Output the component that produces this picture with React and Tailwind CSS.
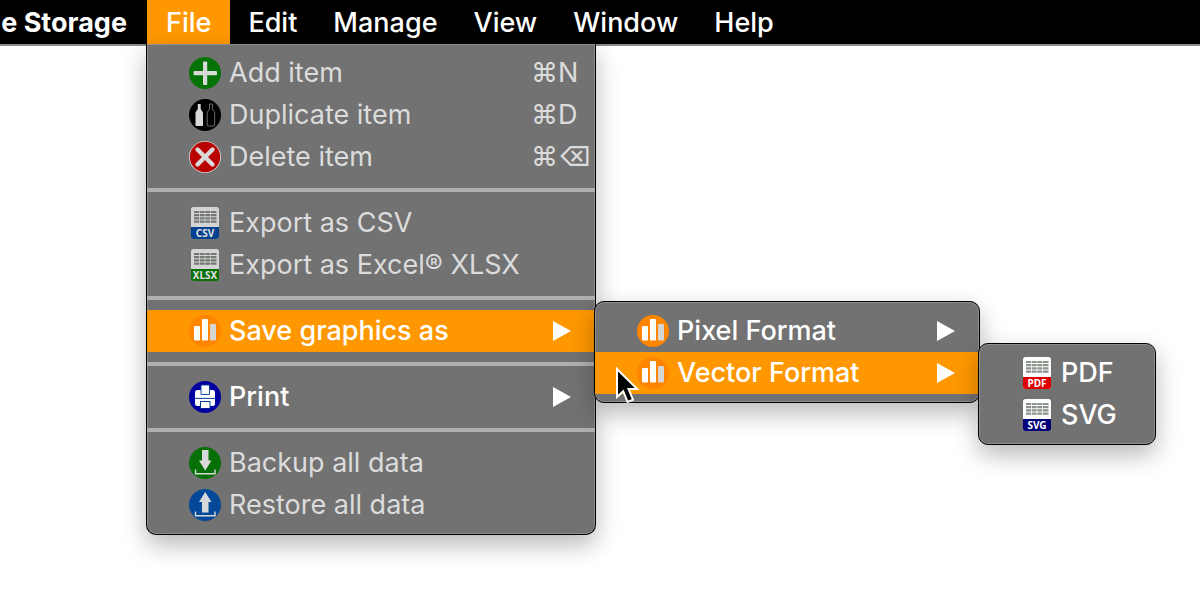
import React from "react";

function Disc({ fill, dim, children }) {
  return (
    <svg viewBox="0 0 32 32" className="size-8 shrink-0" aria-hidden="true">
      <circle cx="16" cy="16" r="16" fill={fill} />
      <g fill={dim ? "#d9d9d9" : "#ffffff"}>{children}</g>
    </svg>
  );
}

const AddIcon = () => (
  <Disc fill="#067306" dim>
    <rect x="4.500" y="14" width="23.500" height="4.200" rx="1" />
    <rect x="14" y="4.500" width="4.200" height="23.500" rx="1" />
  </Disc>
);

const bottle = "M8.800 5h2.900v4.200c0 2.400 2.300 2.400 2.300 5.300V26c0 .7-.4 1-1 1H7.500c-.6 0-1-.3-1-1V14.500c0-2.900 2.300-2.900 2.300-5.300z";

const DuplicateIcon = () => (
  <Disc fill="#000000" dim>
    <path d={bottle} />
    <path d={bottle} transform="translate(11.700 0)" fill="none" stroke="#9a9a9a" strokeWidth="0.7" />
  </Disc>
);

const DeleteIcon = () => (
  <Disc fill="#d9d9d9" dim>
    <circle cx="16" cy="16" r="15.200" fill="#b80000" />
    <path d="M8.500 8.500 23.500 23.500M23.500 8.500 8.500 23.500" stroke="#d9d9d9" strokeWidth="4.400" strokeLinecap="round" />
  </Disc>
);

const ChartIcon = () => (
  <Disc fill="#ff8400">
    <rect x="5" y="11" width="6" height="14.500" rx="1" />
    <rect x="13" y="4" width="6" height="21.500" rx="1" />
    <rect x="21" y="9" width="6" height="16.500" rx="1" fill="#d6d6d6" />
  </Disc>
);

const PrintIcon = () => (
  <Disc fill="#0000a0">
    <rect x="6" y="9" width="20" height="16" rx="2.500" />
    <path d="M12 4h8.500v9.500H12z" stroke="#0a3f96" strokeWidth="0.900" />
    <path d="M6 17.400h20" stroke="#0a3f96" strokeWidth="1" />
    <path d="M11 20h10.500v7.500H11z" fill="#0a3f96" />
    <path d="M12 21h8.500v6H12z" />
  </Disc>
);

const Tray = () => (
  <path d="M6.500 22.500v4.300h19.500v-4.300" fill="none" stroke="#d9d9d9" strokeWidth="1.400" />
);

const BackupIcon = () => (
  <Disc fill="#067006" dim>
    <path d="M13 3h6.500v10.500h3L16.200 23.500 10 13.500h3z" />
    <Tray />
  </Disc>
);

const RestoreIcon = () => (
  <Disc fill="#04489a" dim>
    <path d="M13 23.500h6.500v-10.500h3L16.200 3 10 13h3z" />
    <Tray />
  </Disc>
);

function FileIcon({ label, band, dim }) {
  return (
    <svg viewBox="0 0 32 32" className="size-8 shrink-0" aria-hidden="true">
      <rect x="2" y="0" width="28" height="32" rx="2.500" fill={dim ? "#d4d4d4" : "#ffffff"} />
      <path d="M2 20h28v9.500a2.500 2.500 0 0 1-2.500 2.500h-23A2.500 2.500 0 0 1 2 29.500z" fill={band} />
      <path
        d="M5 5h22.500M5 8.200h22.500M5 11.400h22.500M5 14.600h22.500"
        stroke={dim ? "#737873" : "#8c938c"}
        strokeWidth="2.200"
      />
      <path d="M10.500 3.500v12.500M16 3.500v12.500M21.500 3.500v12.500" stroke={dim ? "#d4d4d4" : "#ffffff"} strokeWidth="0.700" />
      <text
        x="16"
        y="29.500"
        textAnchor="middle"
        className="font-['Noto_Sans',sans-serif] text-[10px] font-bold"
        fill={dim ? "#e0e0e0" : "#ffffff"}
      >
        {label}
      </text>
    </svg>
  );
}

function Arrow() {
  return (
    <svg viewBox="0 0 18 20" className="h-5 w-[18px] shrink-0" aria-hidden="true">
      <path d="M0 0 18 10 0 20z" fill="#ffffff" />
    </svg>
  );
}

function Separator() {
  return (
    <div role="separator" className="flex h-6 items-center">
      <div className="h-1 w-full bg-[#b0b0b0]" />
    </div>
  );
}

function Item({ icon, label, keys, submenu, active, disabled }) {
  return (
    <button
      type="button"
      role="menuitem"
      disabled={disabled}
      aria-haspopup={submenu ? "menu" : undefined}
      className={`flex h-[42px] w-full items-center gap-2 pl-[42px] text-left text-[27px] leading-8 whitespace-nowrap ${
        active ? "bg-[#ff9800]" : ""
      } ${disabled ? "text-[#dcdcdc]" : "font-medium text-white"} ${submenu ? "pr-6" : "pr-1"}`}
    >
      {icon}
      <span className="flex-1">{label}</span>
      {keys && <span className="w-[60px]">{keys}</span>}
      {submenu && <Arrow />}
    </button>
  );
}

const panel =
  "absolute border border-black bg-[#727272] py-2 inset-ring inset-ring-[#8e8e8e] shadow-[0_10px_24px_rgba(0,0,0,0.28)]";

function Cursor() {
  return (
    <svg viewBox="0 0 26 38" className="pointer-events-none absolute top-[367px] left-[615px] h-[38px] w-[26px]" aria-hidden="true">
      <path
        d="M2 2v28l6.200-5.800 4.400 10.800 5.400-2.300-4.500-10.600h8.700z"
        fill="#000000"
        stroke="#ffffff"
        strokeWidth="2"
      />
    </svg>
  );
}

export default function App() {
  return (
    <div className="relative min-h-screen overflow-hidden bg-white font-['Inter','Noto_Sans',sans-serif]">
      <nav className="flex h-[46px] border-b-2 border-[#8a8a8a] bg-black text-[27px] leading-8 font-medium text-white">
        <button type="button" className="flex w-[147px] shrink-0 items-center justify-end overflow-hidden pt-px pr-5 font-bold whitespace-nowrap">
          e Storage
        </button>
        <button type="button" aria-expanded="true" className="bg-[#ff9800] px-[19px] pt-px">File</button>
        {["Edit", "Manage", "View", "Window", "Help"].map((name) => (
          <button key={name} type="button" className="px-[18px] pt-px">{name}</button>
        ))}
      </nav>

      <div role="menu" aria-label="File" className={`${panel} top-11 left-[146px] w-[450px] rounded-b-[10px] border-t-0`}>
        <Item icon={<AddIcon />} label="Add item" keys="⌘N" disabled />
        <Item icon={<DuplicateIcon />} label="Duplicate item" keys="⌘D" disabled />
        <Item icon={<DeleteIcon />} label="Delete item" keys="⌘⌫" disabled />
        <Separator />
        <Item icon={<FileIcon label="CSV" band="#04418f" dim />} label="Export as CSV" disabled />
        <Item icon={<FileIcon label="XLSX" band="#067006" dim />} label="Export as Excel® XLSX" disabled />
        <Separator />
        <Item icon={<ChartIcon />} label="Save graphics as" submenu active />
        <Separator />
        <Item icon={<PrintIcon />} label="Print" submenu />
        <Separator />
        <Item icon={<BackupIcon />} label="Backup all data" disabled />
        <Item icon={<RestoreIcon />} label="Restore all data" disabled />
      </div>

      <div role="menu" aria-label="Save graphics as" className={`${panel} top-[301px] left-[594px] w-[386px] rounded-[10px]`}>
        <Item icon={<ChartIcon />} label="Pixel Format" submenu />
        <Item icon={<ChartIcon />} label="Vector Format" submenu active />
      </div>

      <div role="menu" aria-label="Vector Format" className={`${panel} top-[343px] left-[978px] w-[178px] rounded-[10px]`}>
        <Item icon={<FileIcon label="PDF" band="#e00000" />} label="PDF" />
        <Item icon={<FileIcon label="SVG" band="#000078" />} label="SVG" />
      </div>

      <Cursor />
    </div>
  );
}
